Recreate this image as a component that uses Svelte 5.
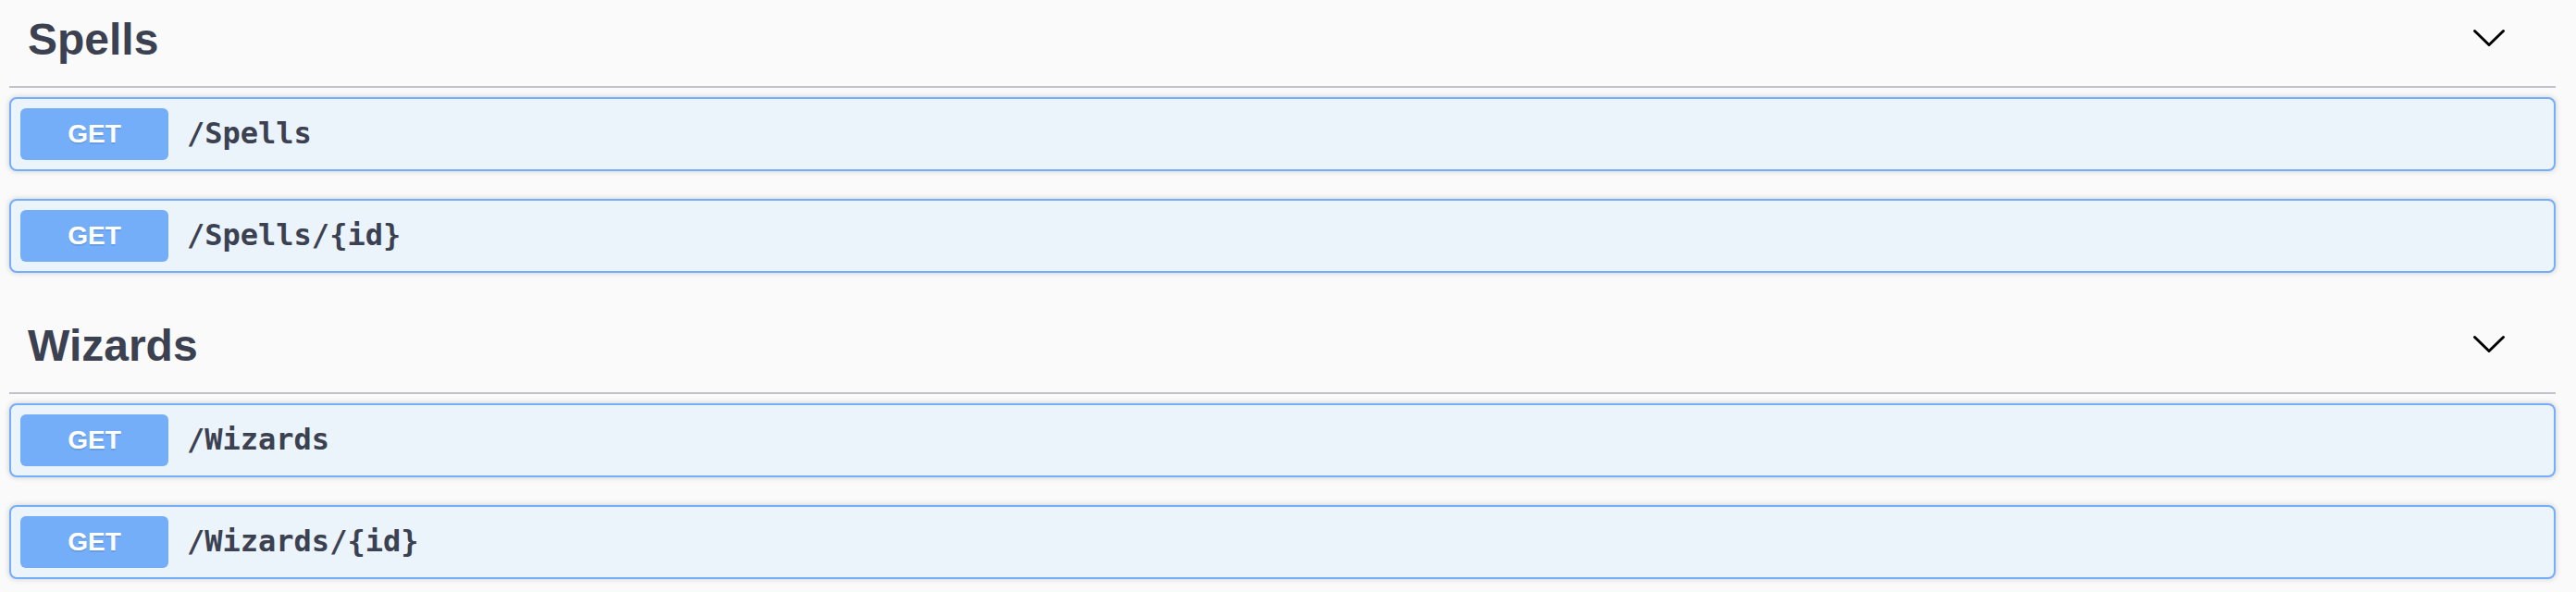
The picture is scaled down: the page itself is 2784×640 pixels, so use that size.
<script>
  const sections = [
    { name: 'Spells', operations: ['/Spells', '/Spells/{id}'] },
    { name: 'Wizards', operations: ['/Wizards', '/Wizards/{id}'] }
  ];
  let collapsed = $state({});
</script>

<main>
  {#each sections as section}
    <section>
      <header>
        <h3>{section.name}</h3>
        <button
          class="toggle"
          aria-label="Toggle {section.name}"
          aria-expanded={!collapsed[section.name]}
          onclick={() => (collapsed[section.name] = !collapsed[section.name])}
        >
          <svg viewBox="0 0 40 40" aria-hidden="true">
            <path d="M4.5 10.5 L20 25.5 L35.5 10.5" />
          </svg>
        </button>
      </header>
      {#if !collapsed[section.name]}
        <div class="operations">
          {#each section.operations as path}
            <button class="operation">
              <span class="method">GET</span>
              <span class="path">{path}</span>
            </button>
          {/each}
        </div>
      {/if}
    </section>
  {/each}
</main>

<style>
  :global(body) {
    margin: 0;
    background: #fafafa;
  }
  main {
    display: flex;
    flex-direction: column;
    gap: 36px;
    padding: 0 22px 8px 10px;
    color: #3b4151;
    font-family: "Liberation Sans", Arial, sans-serif;
  }
  header {
    display: flex;
    align-items: center;
    justify-content: space-between;
    padding: 15px 52px 22px 20px;
    border-bottom: 2px solid #c2c2c8;
  }
  h3 {
    margin: 0;
    font-size: 48px;
    line-height: 56px;
    font-weight: 700;
  }
  button {
    margin: 0;
    border: 0;
    background: none;
    color: inherit;
    font: inherit;
    cursor: pointer;
  }
  .toggle {
    padding: 0;
    width: 40px;
    height: 40px;
  }
  .toggle svg {
    display: block;
    width: 100%;
    height: 100%;
    fill: none;
    stroke: #000;
    stroke-width: 3;
    stroke-linecap: round;
    stroke-linejoin: round;
  }
  .operations {
    display: flex;
    flex-direction: column;
    gap: 30px;
    padding-top: 10px;
  }
  .operation {
    display: flex;
    align-items: center;
    gap: 20px;
    padding: 10px;
    border: 2px solid #74adf8;
    border-radius: 8px;
    background: #ebf3fb;
    box-shadow: 0 0 6px rgba(0, 0, 0, 0.19);
    text-align: left;
  }
  .method {
    min-width: 160px;
    padding: 12px 0;
    border-radius: 6px;
    background: #74adf8;
    color: #fff;
    font-size: 28px;
    line-height: 32px;
    font-weight: 700;
    text-align: center;
    text-shadow: 0 2px 0 rgba(0, 0, 0, 0.1);
  }
  .path {
    padding-bottom: 2px;
    font-family: "DejaVu Sans Mono", monospace;
    font-size: 32px;
    line-height: 38px;
    font-weight: 700;
  }
</style>
